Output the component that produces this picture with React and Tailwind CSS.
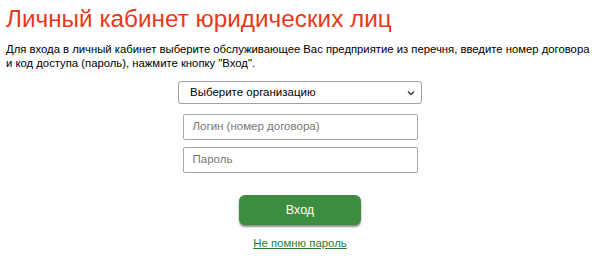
export default function App() {
  return (
    <div className="w-[600px] h-[256px] bg-white px-[6px] pt-[3px]" style={{ fontFamily: '"Liberation Sans", Arial, sans-serif' }}>
      <h1 className="text-[24.3px] leading-[32px] text-[#e8391c] font-normal">Личный кабинет юридических лиц</h1>
      <p className="mt-[7px] text-[11.3px] leading-[14px] text-black">
        Для входа в личный кабинет выберите обслуживающее Вас предприятие из перечня, введите номер договора и код доступа (пароль), нажмите кнопку "Вход".
      </p>
      <div className="flex flex-col items-center mt-[11px]">
        <div className="relative w-[244px] h-[23px] border border-[#a0a0a0] rounded-[3px] flex items-center pl-[11px] text-[11.5px] text-black">
          Выберите организацию
          <svg className="absolute right-[6px] top-[8px]" width="8" height="6" viewBox="0 0 8 6" fill="none">
            <path d="M1 1.5 L4 4.5 L7 1.5" stroke="#333" strokeWidth="1.3" />
          </svg>
        </div>
        <div className="mt-[10px] w-[235px] h-[26px] border border-[#a8a8a8] rounded-[2px] flex items-center pl-[9px] text-[11.5px] text-[#767676]">
          Логин (номер договора)
        </div>
        <div className="mt-[7px] w-[235px] h-[26px] border border-[#a8a8a8] rounded-[2px] flex items-center pl-[9px] text-[11.5px] text-[#767676]">
          Пароль
        </div>
        <button className="mt-[22px] w-[122px] h-[30px] rounded-[6px] bg-[#3d8d41] text-white text-[12.5px] shadow-[0_2px_2px_rgba(0,0,0,0.45)]">
          Вход
        </button>
        <a href="#" className="mt-[11px] text-[11.4px] leading-[14px] text-[#2b7a2f] underline">Не помню пароль</a>
      </div>
    </div>
  );
}
